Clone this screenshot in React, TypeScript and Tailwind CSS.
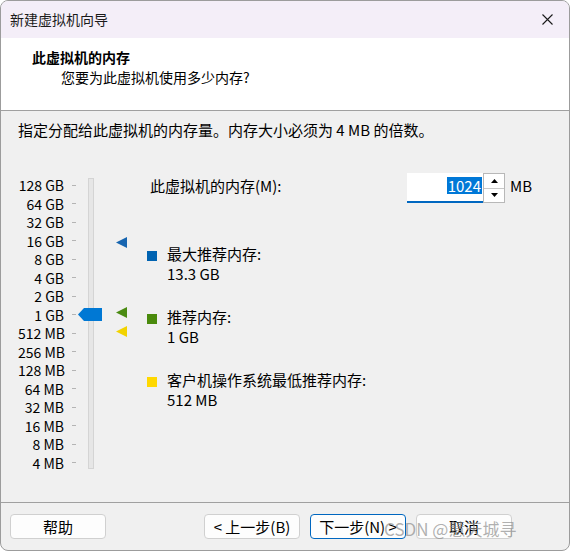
import React from 'react';

const FONT = { fontFamily: '"Noto Sans CJK SC", "Noto Sans", sans-serif' };

const SCALE = [
  '128 GB', '64 GB', '32 GB', '16 GB', '8 GB', '4 GB', '2 GB', '1 GB',
  '512 MB', '256 MB', '128 MB', '64 MB', '32 MB', '16 MB', '8 MB', '4 MB',
];

// marker positions on the slider (top offsets inside the left column)
const MARKERS = [
  { color: '#1765b0', top: 67 },
  { color: '#4b8b12', top: 137 },
  { color: '#f2d300', top: 156 },
];

const LEGEND = [
  { color: '#0063b1', label: '最大推荐内存:', value: '13.3 GB' },
  { color: '#4a8a0c', label: '推荐内存:', value: '1 GB' },
  { color: '#ffd800', label: '客户机操作系统最低推荐内存:', value: '512 MB' },
];

const Button = ({ children, focused }: { children: React.ReactNode; focused?: boolean }) => (
  <button
    className={`w-[96px] h-[25px] rounded-[4px] bg-[#fdfdfd] text-[15px] leading-none text-black ${
      focused ? 'border border-[#0067c0]' : 'border border-[#d0d0d0]'
    }`}
  >
    {children}
  </button>
);

const MemorySlider = () => (
  <div className="relative flex w-[129px] shrink-0">
    <div className="flex flex-col justify-between mt-[6px] h-[296px]">
      {SCALE.map((s) => (
        <div key={s} className="flex items-center h-[18px]">
          <span className="w-[46px] text-right text-[14px] leading-[18px] text-black whitespace-nowrap">{s}</span>
          <span className="ml-[8px] w-[4px] h-px bg-[#b4b4b4]" />
        </div>
      ))}
    </div>
    <div className="ml-[12px] mt-[8px] w-[6px] h-[291px] bg-[#e6e6e6] border border-[#d4d4d4]" />

    {/* slider thumb at 1 GB */}
    <svg className="absolute left-[60px] top-[138px]" width="24" height="13" viewBox="0 0 24 13">
      <polygon points="0,6.5 6,0 24,0 24,13 6,13" fill="#0078d4" />
    </svg>

    {MARKERS.map((m) => (
      <svg key={m.color} className="absolute left-[98px]" style={{ top: m.top }} width="11" height="11" viewBox="0 0 11 11">
        <polygon points="0,5.5 11,0 11,11" fill={m.color} />
      </svg>
    ))}
  </div>
);

export default function App() {
  return (
    <div
      className="w-[570px] h-[551px] flex flex-col rounded-[8px] border border-[#9c9c9c] overflow-hidden bg-[#f0f0f0] text-black"
      style={FONT}
    >
      {/* title bar */}
      <div className="h-[37px] shrink-0 flex items-center justify-between bg-[#f4eef8] pl-[9px] pr-[16px]">
        <span className="text-[14px] text-[#1a1a1a]">新建虚拟机向导</span>
        <svg width="11" height="11" viewBox="0 0 11 11">
          <path d="M0.5 0.5 L10.5 10.5 M10.5 0.5 L0.5 10.5" stroke="#1a1a1a" strokeWidth="1.1" />
        </svg>
      </div>

      {/* header */}
      <div className="h-[73px] shrink-0 bg-white border-b border-[#a0a0a0] pl-[31px] pt-[9px]">
        <div className="text-[14px] leading-[20px] font-bold">此虚拟机的内存</div>
        <div className="text-[14px] leading-[20px] pl-[29px]">您要为此虚拟机使用多少内存?</div>
      </div>

      {/* body */}
      <div className="flex-1 pl-[17px] pt-[9px]">
        <div className="text-[15px] leading-[20px]">指定分配给此虚拟机的内存量。内存大小必须为 4 MB 的倍数。</div>

        <div className="flex mt-[30px]">
          <MemorySlider />

          <div className="flex flex-col">
            <div className="flex items-center h-[30px] mt-[3px]">
              <span className="w-[260px] pl-[3px] text-[15px] -mt-[3px]">此虚拟机的内存(M):</span>
              <div className="flex items-center">
                <div className="w-[76px] h-[30px] bg-white border-b-2 border-[#0067c0] flex items-center justify-end pr-px">
                  <span className="bg-[#0078d7] text-white text-[15px] leading-[17px] px-px -mt-[3px]">1024</span>
                </div>
                <div className="flex flex-col w-[22px] h-[30px] border border-[#b8b8b8] bg-white">
                  <div className="flex-1 flex items-center justify-center border-b border-[#c8c8c8]">
                    <svg width="7" height="4" viewBox="0 0 7 4"><polygon points="3.5,0 7,4 0,4" fill="#000" /></svg>
                  </div>
                  <div className="flex-1 flex items-center justify-center">
                    <svg width="7" height="4" viewBox="0 0 7 4"><polygon points="0,0 7,0 3.5,4" fill="#000" /></svg>
                  </div>
                </div>
                <span className="ml-[5px] text-[15px] -mt-[3px]">MB</span>
              </div>
            </div>

            <div className="flex flex-col gap-[23px] mt-[41px]">
              {LEGEND.map((l) => (
                <div key={l.label} className="flex">
                  <span className="w-[10px] h-[10px] mt-[7px] shrink-0" style={{ background: l.color }} />
                  <div className="ml-[10px] text-[15px] leading-[20px]">
                    <div>{l.label}</div>
                    <div>{l.value}</div>
                  </div>
                </div>
              ))}
            </div>
          </div>
        </div>
      </div>

      {/* footer */}
      <div className="relative h-[48px] shrink-0 border-t border-[#a0a0a0] flex items-center justify-between pl-[9px] pr-[57px]">
        <Button>帮助</Button>
        <div className="flex gap-[10px]">
          <Button>&lt; 上一步(B)</Button>
          <Button focused>下一步(N) &gt;</Button>
          <Button>取消</Button>
        </div>
        <span className="absolute left-[383px] top-[13px] text-[17px] text-[#8e8e8e]/70 pointer-events-none">
          CSDN @慧天城寻
        </span>
      </div>
    </div>
  );
}
